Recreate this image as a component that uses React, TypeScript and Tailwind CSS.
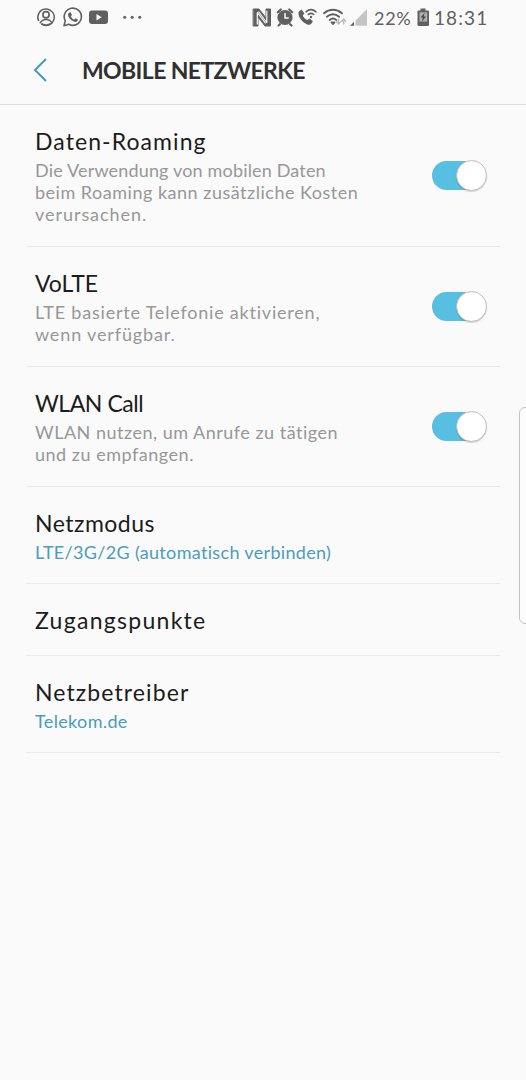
import React from "react";

type Line = { text: string; className: string };
type Item = { title: string; titleClass: string; lines: Line[]; height: string; accent?: boolean; toggle?: boolean };

const items: Item[] = [
  {
    title: "Daten-Roaming",
    titleClass: "tracking-[1.08px]",
    height: "h-[142px]",
    toggle: true,
    lines: [
      { text: "Die Verwendung von mobilen Daten", className: "tracking-[0.17px]" },
      { text: "beim Roaming kann zusätzliche Kosten", className: "tracking-[0.51px]" },
      { text: "verursachen.", className: "tracking-[0.95px]" },
    ],
  },
  {
    title: "VoLTE",
    titleClass: "tracking-normal",
    height: "h-[120px]",
    toggle: true,
    lines: [
      { text: "LTE basierte Telefonie aktivieren,", className: "tracking-[0.79px]" },
      { text: "wenn verfügbar.", className: "tracking-[0.86px]" },
    ],
  },
  {
    title: "WLAN Call",
    titleClass: "tracking-[-0.45px]",
    height: "h-[120px]",
    toggle: true,
    lines: [
      { text: "WLAN nutzen, um Anrufe zu tätigen", className: "tracking-[0.5px]" },
      { text: "und zu empfangen.", className: "tracking-[0.52px]" },
    ],
  },
  {
    title: "Netzmodus",
    titleClass: "tracking-[0.5px]",
    height: "h-[97px]",
    accent: true,
    lines: [{ text: "LTE/3G/2G (automatisch verbinden)", className: "tracking-[0.33px]" }],
  },
  { title: "Zugangspunkte", titleClass: "tracking-[1.28px]", height: "h-[72px]", lines: [] },
  {
    title: "Netzbetreiber",
    titleClass: "tracking-[1.1px]",
    height: "h-[97px]",
    accent: true,
    lines: [{ text: "Telekom.de", className: "tracking-[0.35px]" }],
  },
];

function Toggle() {
  return (
    <div className="flex h-[29px] w-[55px] shrink-0 items-center justify-end rounded-full bg-gradient-to-r from-[#57bfe1] from-80% to-transparent to-80%">
      <div className="h-[31px] w-[31px] shrink-0 rounded-full border border-[#bdbdbd] bg-white shadow-[0_1px_1px_rgba(0,0,0,0.15)]" />
    </div>
  );
}

function SettingRow({ item }: { item: Item }) {
  return (
    <div className={`flex items-center border-b border-[#e9e9e9] pr-[13px] pl-[9px] ${item.height}`}>
      <div className="flex h-full grow flex-col items-start pt-[22px] whitespace-nowrap">
        <div className={`text-[23px] leading-7 text-[#1c1c1c] ${item.titleClass}`}>{item.title}</div>
        <div className={`mt-1 flex flex-col items-start text-[18px] leading-[22px] ${item.accent ? "text-[#4a9dbb]" : "text-[#979797]"}`}>
          {item.lines.map((l) => (
            <span key={l.text} className={l.className}>{l.text}</span>
          ))}
        </div>
      </div>
      {item.toggle && <Toggle />}
    </div>
  );
}

function StatusBar() {
  return (
    <div className="flex h-[36px] items-start text-[#606060]">
      <svg className="h-[36px] w-[370px] shrink-0" viewBox="0 0 370 36" fill="none" stroke="currentColor" strokeWidth="1.5" strokeLinecap="round" strokeLinejoin="round">
        <path d="M38.5 20.5a8.2 8.2 0 1 1 3.2 3.7" />
        <circle cx="46" cy="14.7" r="3.1" strokeWidth="1.7" />
        <path d="M40.2 22.8c1.4-2.6 3.3-3.4 5.8-3.4s4.6.8 5.8 3.4" />
        <path d="M42 24c2.6 1.5 5.6 1.5 8 0" />
        <path d="M64 25.7l1.3-4.8a8.6 8.6 0 1 1 3.3 3.3z" strokeWidth="1.6" />
        <path d="M69.2 12.5l1.7.1 1 2.5-1 1.3c.8 1.6 1.9 2.6 3.4 3.2l1.2-1.3 2.3 1.2c.1 1.6-.9 2.3-2.3 2.4-3.6-.3-7.3-4-7.4-7.1 0-.9.4-1.7 1.1-2.3z" fill="currentColor" stroke="none" />
        <rect x="89" y="10.5" width="19" height="13.5" rx="3" fill="currentColor" stroke="none" />
        <path d="M96.5 14v6.5l5.2-3.2z" fill="#fafafa" stroke="none" />
        <g fill="currentColor" stroke="none">
          <circle cx="124.7" cy="17.2" r="1.5" />
          <circle cx="132.2" cy="17.2" r="1.5" />
          <circle cx="139.7" cy="17.2" r="1.5" />
        </g>
        <path d="M253.500 9h5.500l7 9V9h4.500v17H265l-7-9v9h-4.500z" fill="currentColor" stroke="currentColor" strokeWidth="1" />
        <path d="M257.300 24V12.500l8 10.500M266.800 11v11.500l-8-10.500" stroke="#fafafa" strokeWidth="1.200" />
        <circle cx="285" cy="17.5" r="7.6" fill="currentColor" stroke="none" />
        <path d="M277.8 12.3l3-2.8M292.2 12.3l-3-2.8M280 24.2l-1.5 1.3M290 24.2l1.5 1.3" strokeWidth="2.2" />
        <path d="M285 13.5V18h3.2" stroke="#fafafa" strokeWidth="1.5" />
        <path d="M299.2 11.2l2.5-1.6 2.7 3.8-1.7 2.1c1 2.1 2.5 3.6 4.7 4.5l2.2-1.6 3.3 2.9-1.8 2.7c-1 .9-2.5.9-3.9.4-4.3-1.5-8-5.8-8.7-10.3-.1-1.1.1-2.2.7-2.9z" fill="currentColor" stroke="none" />
        <path d="M306 11.8c3.2-2.7 6.8-2.7 10 0M308.3 14.5c1.8-1.4 3.7-1.4 5.4 0" strokeWidth="1.6" />
        <circle cx="311" cy="17" r="1.2" fill="currentColor" stroke="none" />
        <path d="M324 13.3c5.5-4.7 12.5-4.7 18 0M326.8 16.7c3.9-3.2 8.5-3.2 12.4 0M329.7 19.9c2.1-1.7 4.5-1.7 6.600 0" strokeWidth="1.9" />
        <path d="M331.3 22.3l1.7 2 1.7-2z" fill="currentColor" />
        <path d="M338.5 19v4.7m-2-1.9l2 2.2 2-2.2M343.7 24v-4.7m-2 1.9l2-2.2 2 2.2" stroke="#bababa" strokeWidth="1.3" />
        <path d="M355.5 25.7V20.5L367 9v16.7z" fill="#c5c5c5" stroke="none" />
        <path d="M350 25.7l4-4v4z" fill="currentColor" stroke="none" />
      </svg>
      <span className="ml-1 w-[43px] text-[18px] leading-[36px] whitespace-nowrap tracking-[0.7px]">22%</span>
      <svg className="h-[36px] w-[13px] shrink-0" viewBox="0 0 13 36">
        <path d="M3.500 10.500V8.500h5v2H11q1 0 1 1V25q0 1-1 1H1.500q-1 0-1-1V11.500q0-1 1-1z" fill="currentColor" />
        <path d="M2.500 12.300h7.700v9.200H2.500z" fill="#b0b0b0" />
        <path d="M7.600 12.800l-4 4.800h2.200L5 21.500l4-5H6.800z" fill="#484848" />
      </svg>
      <span className="ml-1 text-[19px] leading-[36px] whitespace-nowrap tracking-[1.1px]">18:31</span>
    </div>
  );
}

export default function App() {
  return (
    <div className="relative flex h-[1080px] w-[526px] flex-col overflow-hidden bg-[#fafafa] font-['Lato','Noto_Sans',sans-serif]">
      <StatusBar />
      <header className="flex h-[69px] items-center border-b border-[#dedede] pl-8">
        <svg className="h-6 w-4 shrink-0" viewBox="0 0 16 24" fill="none" stroke="#4799bd" strokeWidth="2">
          <path d="M14 1L3 12l11 11" />
        </svg>
        <h1 className="ml-[34px] text-[23px] leading-7 font-bold tracking-[-0.62px] whitespace-nowrap text-[#303030]">MOBILE NETZWERKE</h1>
      </header>
      <main className="flex flex-col pr-[26px] pl-[26px]">
        {items.map((item) => (
          <SettingRow key={item.title} item={item} />
        ))}
      </main>
      <div className="absolute top-[407px] -right-[6px] h-[217px] w-[13px] rounded-[6px] border border-[#c4c4c4] bg-[#fcfcfc]" />
    </div>
  );
}
